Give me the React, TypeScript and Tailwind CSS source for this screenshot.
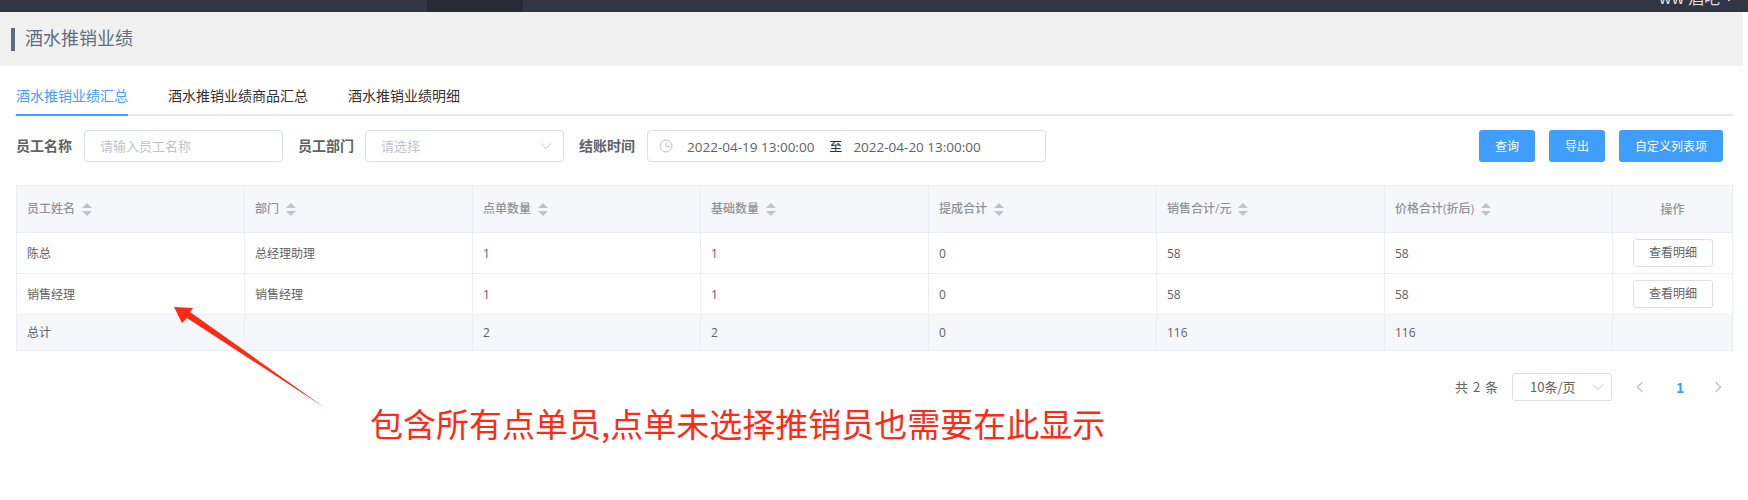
const cjk = { fontFamily: '"Noto Sans CJK SC", "Liberation Sans", sans-serif' };
const latin = { fontFamily: '"Open Sans", "Noto Sans CJK SC", sans-serif' };

function Sort() {
  return (
    <svg width="10" height="13" viewBox="0 0 10 13" className="ml-[7px] shrink-0">
      <path d="M5 0 L10 5 H0 Z" fill="#c0c4cc" />
      <path d="M5 13 L10 8 H0 Z" fill="#c0c4cc" />
    </svg>
  );
}

function Chevron({ cls = "" }: { cls?: string }) {
  return (
    <svg width="12" height="8" viewBox="0 0 12 8" fill="none" className={cls}>
      <path d="M1 1.5 L6 6.5 L11 1.5" stroke="#c0c4cc" strokeWidth="1" />
    </svg>
  );
}

const headers = ["员工姓名", "部门", "点单数量", "基础数量", "提成合计", "销售合计/元", "价格合计(折后)"];
const rows = [
  ["陈总", "总经理助理", "1", "1", "0", "58", "58"],
  ["销售经理", "销售经理", "1", "1", "0", "58", "58"],
];
const total = ["总计", "", "2", "2", "0", "116", "116"];

function Cell({ children, cls = "" }: { children?: React.ReactNode; cls?: string }) {
  return (
    <div className={`flex w-[228px] items-center border-r border-[#ebeef5] pl-[10px] ${cls}`}>
      {children}
    </div>
  );
}

function Row({ r }: { r: string[] }) {
  return (
    <div className="flex h-[41px] border-b border-[#ebeef5] bg-white text-[#606266]">
      {r.map((c, i) => (
        <Cell key={i} cls="pt-[2px]">{c}</Cell>
      ))}
      <div className="flex flex-1 items-center justify-center pl-px">
        <button className="h-[28px] w-[80px] rounded-[3px] border border-[#dcdfe6] bg-white text-[12px] text-[#606266]">
          查看明细
        </button>
      </div>
    </div>
  );
}

export default function App() {
  return (
    <div className="relative h-[500px] w-[1748px] overflow-hidden bg-white" style={cjk}>
      <div className="flex h-[12px] overflow-hidden bg-[#323643] pl-[427px]">
        <div className="h-full w-[96px] bg-[#282a36]" />
        <div className="ml-auto mr-[15px] -mt-[13px] flex h-[20px] items-center text-[16px] leading-[20px] text-[#dfe0e4]">
          ww 酒吧
          <svg width="8" height="8" viewBox="0 0 8 8" fill="none" stroke="#c8c9ce" strokeWidth="1" className="ml-[5px]">
            <path d="M0 4 L4 8 L8 4" />
          </svg>
        </div>
      </div>

      <div className="mr-[5px] flex h-[54px] items-center bg-[#f1f1f1] pl-[11px]">
        <div className="h-[23px] w-[4px] bg-[#5b6b80]" />
        <div className="mb-[4px] ml-[10px] text-[18px] text-[#5e6d82]">酒水推销业绩</div>
      </div>

      <div className="mx-[15px] mt-[15px] flex h-[35px] gap-[40px] border-b-2 border-[#e4e7ed] pl-px text-[14px] text-[#303133]">
        <div className="h-[35px] border-b-2 border-[#409eff] pt-[4px] leading-[20px] text-[#409eff]">酒水推销业绩汇总</div>
        <div className="pt-[4px] leading-[20px]">酒水推销业绩商品汇总</div>
        <div className="pt-[4px] leading-[20px]">酒水推销业绩明细</div>
      </div>

      <div className="ml-[16px] mr-[25px] mt-[14px] flex h-[32px] items-center text-[14px]">
        <label className="mb-[2px] w-[68px] font-bold text-[#606266]">员工名称</label>
        <div className="flex h-[32px] w-[199px] items-center rounded-[4px] border border-[#dcdfe6] pl-[15px] text-[13px] text-[#c0c4cc]">
          请输入员工名称
        </div>
        <label className="mb-[2px] ml-[15px] w-[67px] font-bold text-[#606266]">员工部门</label>
        <div className="flex h-[32px] w-[199px] items-center justify-between rounded-[4px] border border-[#dcdfe6] px-[15px] pr-[11px] text-[13px] text-[#c0c4cc]">
          请选择
          <Chevron />
        </div>
        <label className="mb-[2px] ml-[15px] w-[68px] font-bold text-[#606266]">结账时间</label>
        <div className="flex h-[32px] w-[399px] items-center rounded-[4px] border border-[#dcdfe6] pl-[11px] text-[13.5px] text-[#606266]">
          <svg width="14" height="14" viewBox="0 0 14 14" fill="none" stroke="#c0c4cc" strokeWidth="1" className="shrink-0">
            <circle cx="7" cy="7" r="6" />
            <path d="M7 3.5 V7.5 H10.5" />
          </svg>
          <span className="ml-[14px] mt-[2px]" style={latin}>2022-04-19 13:00:00</span>
          <span className="ml-[15px] text-[13px] text-[#303133]">至</span>
          <span className="ml-[11px] mt-[2px]" style={latin}>2022-04-20 13:00:00</span>
        </div>
        <div className="ml-auto flex gap-[14px] text-[12px] text-white">
          <button className="h-[32px] w-[56px] rounded-[3px] bg-[#409eff]">查询</button>
          <button className="h-[32px] w-[56px] rounded-[3px] bg-[#409eff]">导出</button>
          <button className="h-[32px] w-[104px] rounded-[3px] bg-[#409eff]">自定义列表项</button>
        </div>
      </div>

      <div className="ml-[16px] mt-[23px] w-[1717px] border border-[#ebeef5] text-[12px]" style={latin}>
        <div className="flex h-[47px] border-b border-[#ebeef5] bg-[#f5f7fa] font-medium text-[#909399]">
          {headers.map((h) => (
            <Cell key={h}>
              {h}
              <Sort />
            </Cell>
          ))}
          <div className="flex flex-1 items-center justify-center pt-[2px]">操作</div>
        </div>
        {rows.map((r) => (
          <Row key={r[0]} r={r} />
        ))}
        <div className="flex h-[35px] bg-[#f5f7fa] text-[#606266]">
          {total.map((c, i) => (
            <Cell key={i}>{c}</Cell>
          ))}
        </div>
      </div>

      <div className="mt-[22px] flex h-[28px] items-center text-[13px] text-[#606266]">
        <span className="ml-[1455px] [word-spacing:2px]">共 2 条</span>
        <div className="ml-[14px] flex h-[28px] w-[100px] items-center justify-between rounded-[3px] border border-[#dcdfe6] pl-[17px] pr-[7px]">
          10条/页
          <Chevron />
        </div>
        <svg width="8" height="12" viewBox="0 0 8 12" fill="none" stroke="#c0c4cc" strokeWidth="1.4" className="ml-[24px]">
          <path d="M6.5 1 L1.5 6 L6.5 11" />
        </svg>
        <span className="ml-[32px] text-[14px] font-bold text-[#409eff]">1</span>
        <svg width="8" height="12" viewBox="0 0 8 12" fill="none" stroke="#c0c4cc" strokeWidth="1.4" className="ml-[30px]">
          <path d="M1.5 1 L6.5 6 L1.5 11" />
        </svg>
      </div>

      <svg width="160" height="110" viewBox="0 0 160 110" className="absolute left-[170px] top-[303px]">
        <path d="M4 4 L23 5 L20 9 L154.5 104.5 L17 15 L12 20 Z" fill="#ff2a14" />
      </svg>
      <div className="absolute left-[370px] top-[400px] whitespace-nowrap text-[33px] leading-[46px] text-[#ff2a14]">
        包含所有点单员,点单未选择推销员也需要在此显示
      </div>
    </div>
  );
}
